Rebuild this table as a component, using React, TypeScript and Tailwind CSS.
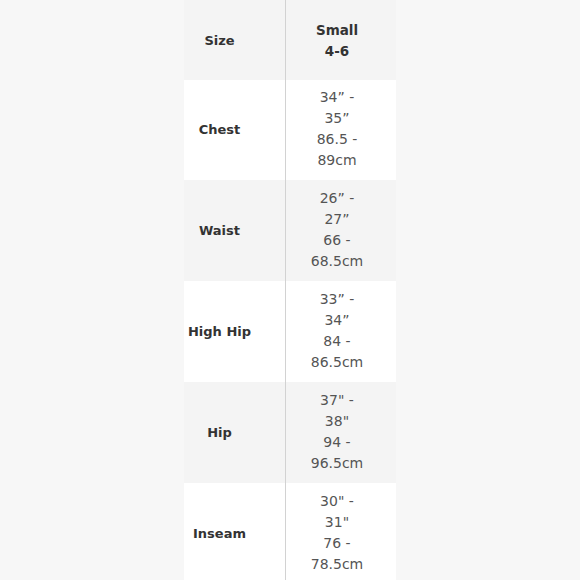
import React from "react";

const rows: { label: string; lines: string[]; gray: boolean; h: string }[] = [
  { label: "Chest", lines: ["34\u201D -", "35\u201D", "86.5 -", "89cm"], gray: false, h: "h-[100px]" },
  { label: "Waist", lines: ["26\u201D -", "27\u201D", "66 -", "68.5cm"], gray: true, h: "h-[101px]" },
  { label: "High Hip", lines: ["33\u201D -", "34\u201D", "84 -", "86.5cm"], gray: false, h: "h-[101px]" },
  { label: "Hip", lines: ['37" -', '38"', "94 -", "96.5cm"], gray: true, h: "h-[101px]" },
  { label: "Inseam", lines: ['30" -', '31"', "76 -", "78.5cm"], gray: false, h: "h-[101px]" },
];

export default function App() {
  return (
    <div
      className="w-[580px] h-[580px] overflow-hidden bg-[#f7f7f7] flex justify-center"
      style={{ fontFamily: "'DejaVu Sans', 'Liberation Sans', sans-serif" }}
    >
      <div className="w-[212px] flex flex-col relative">
        <div className="absolute left-[101px] top-0 bottom-0 w-px bg-[#d2d2d2]" />
        <div className="h-[80px] shrink-0 flex bg-[#f4f4f4] pt-px">
          <div className="w-[101px] pr-[30px] flex items-center justify-center text-[13px] font-bold text-[#333333]">
            Size
          </div>
          <div className="flex-1 ml-px pr-[8px] flex flex-col items-center justify-center text-[13.5px] font-bold text-[#333333] leading-[21px]">
            <span>Small</span>
            <span>4-6</span>
          </div>
        </div>
        {rows.map((r) => (
          <div
            key={r.label}
            className={`${r.h} shrink-0 flex ${r.gray ? "bg-[#f4f4f4]" : "bg-white"}`}
          >
            <div className="w-[101px] pr-[30px] flex items-center justify-center text-[13px] font-bold text-[#333333] whitespace-nowrap">
              {r.label}
            </div>
            <div className="flex-1 ml-px pr-[8px] flex flex-col items-center justify-center text-[14px] text-[#555555] leading-[21px] pb-[2px]">
              {r.lines.map((l, i) => (
                <span key={i}>{l}</span>
              ))}
            </div>
          </div>
        ))}
      </div>
    </div>
  );
}
